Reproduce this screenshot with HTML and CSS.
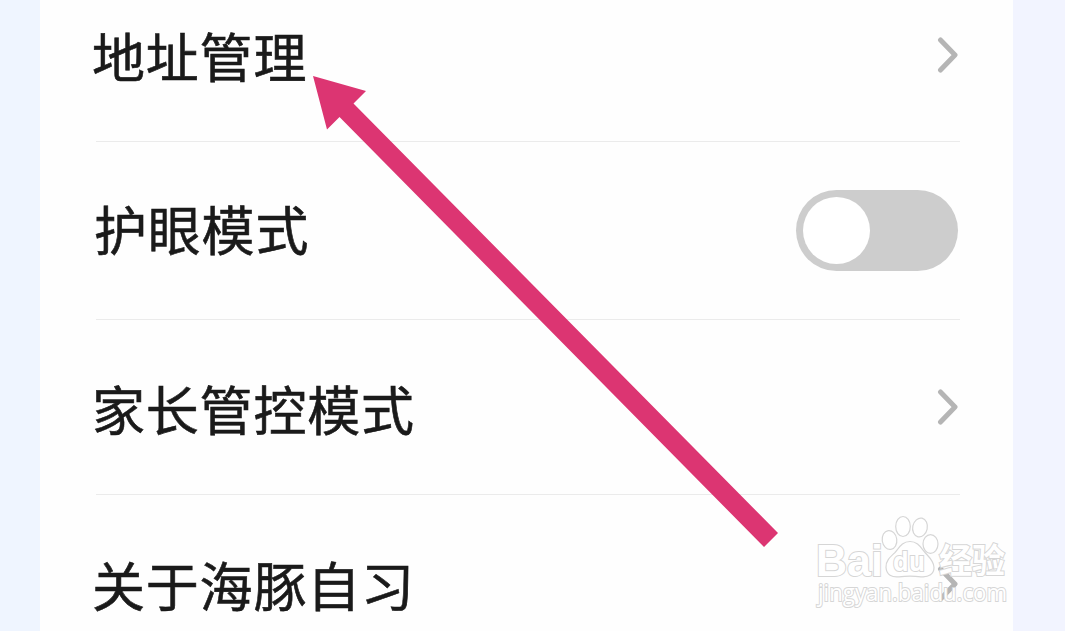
FILE: index.html
```html
<!DOCTYPE html>
<html lang="zh-CN">
<head>
  <meta charset="UTF-8">
  <meta name="viewport" content="width=device-width, initial-scale=1.0">
  <title>设置</title>
  <link rel="stylesheet" href="styles.css">
</head>
<body>

  <!-- Settings List -->
  <main class="panel">
    <div class="row row-address">
      <span class="label">地址管理</span>
      <svg class="chevron" viewBox="0 0 22 36"><path d="M3.5 3 L18 18 L3.5 33"/></svg>
    </div>
    <div class="row row-eye">
      <span class="label">护眼模式</span>
      <div class="switch"><div class="knob"></div></div>
    </div>
    <div class="row row-parent">
      <span class="label">家长管控模式</span>
      <svg class="chevron" viewBox="0 0 22 36"><path d="M3.5 3 L18 18 L3.5 33"/></svg>
    </div>
    <div class="row row-about">
      <span class="label">关于海豚自习</span>
      <svg class="chevron" viewBox="0 0 22 36"><path d="M3.5 3 L18 18 L3.5 33"/></svg>
    </div>
  </main>

  <!-- Pointer arrow -->
  <svg class="arrow" viewBox="0 0 1065 631">
    <polygon points="313,76 366,91 353.5,103.5 778,533 764,547 339.5,117 327,129.5"/>
  </svg>

  <!-- Watermark -->
  <svg class="watermark" viewBox="0 0 230 131">
    <text class="brand" x="16" y="76" textLength="67" lengthAdjust="spacingAndGlyphs">Bai</text>
    <ellipse cx="89.5" cy="40" rx="7.3" ry="9.5" transform="rotate(-8 89.5 40)"/>
    <ellipse cx="103" cy="26.5" rx="7.3" ry="10"/>
    <ellipse cx="120" cy="27.5" rx="7.3" ry="9.5" transform="rotate(12 120 27.5)"/>
    <ellipse cx="130.500" cy="44" rx="7.5" ry="9.3"/>
    <path d="M110 41.500 C102 41.500 99 48 95 52.500 C90 57 85.500 61 86 67.500 C86.500 75 92 77.500 99 76.800 C105 76 115 76 121 76.800 C129 77.500 134 74 134 67.500 C134 61 129 57 125 52.500 C121 48 118 41.500 110 41.500Z"/>
    <text class="du" x="93" y="71" textLength="32" lengthAdjust="spacingAndGlyphs">du</text>
    <text class="jingyan" x="139" y="73" textLength="66" lengthAdjust="spacingAndGlyphs">经验</text>
    <text class="url" x="18" y="101" textLength="189" lengthAdjust="spacingAndGlyphs">jingyan.baidu.com</text>
  </svg>

</body>
</html>
```
FILE: styles.css
```css
/* General Styles */
* {
  box-sizing: border-box;
}

body {
  margin: 0;
  height: 631px;
  padding: 0 52px 0 40px;
  overflow: hidden;
  background: linear-gradient(90deg, #eff5ff 50%, #f2f4ff 50%);
  font-family: "Noto Sans CJK SC", sans-serif;
  color: #1a1a1a;
}

/* Settings List */
.panel {
  height: 631px;
  padding: 0 53px 0 56px;
  overflow: hidden;
  background-color: #fefefe;
}

.row {
  display: flex;
  justify-content: space-between;
  align-items: center;
  border-bottom: 1px solid #ebebeb;
}

.row-address {
  height: 142px;
  padding-bottom: 31px;
}

.row-eye {
  height: 178px;
}

.row-parent {
  height: 175px;
}

.row-about {
  height: 178px;
  border-bottom: none;
}

.label {
  margin-left: -4px;
  font-size: 53px;
  line-height: 64px;
  letter-spacing: 0.8px;
  -webkit-text-stroke: 0.6px #1a1a1a;
}

.row-eye .label {
  margin-left: -2px;
  padding-bottom: 5px;
}

.row-parent .label {
  padding-top: 2px;
}

.chevron {
  width: 22px;
  height: 36px;
  margin-right: 1px;
  fill: none;
  stroke: #b5b5b5;
  stroke-width: 5;
  stroke-linecap: round;
  stroke-linejoin: round;
}

.switch {
  width: 162px;
  height: 81px;
  margin-right: 2px;
  padding: 7px;
  border-radius: 41px;
  background-color: #cdcdcd;
}

.knob {
  width: 67px;
  height: 67px;
  border-radius: 50%;
  background-color: #fff;
}

/* Arrow over the list */
.arrow {
  position: absolute;
  left: 0;
  top: 0;
  width: 1065px;
  height: 631px;
  fill: #dc3572;
}

/* Watermark */
.watermark {
  position: absolute;
  left: 800px;
  top: 500px;
  width: 230px;
  height: 131px;
  fill: #fff;
  stroke: #d6d6d6;
  stroke-width: 1.2;
}

.watermark text {
  paint-order: stroke;
  stroke-width: 2;
}

.brand {
  font: bold 44px "Liberation Sans", sans-serif;
}

.du {
  font: bold 27px "Open Sans", sans-serif;
}

.jingyan {
  font: bold 34px "Noto Sans CJK SC", sans-serif;
}

.url {
  font: 24px "Open Sans", sans-serif;
}
```
